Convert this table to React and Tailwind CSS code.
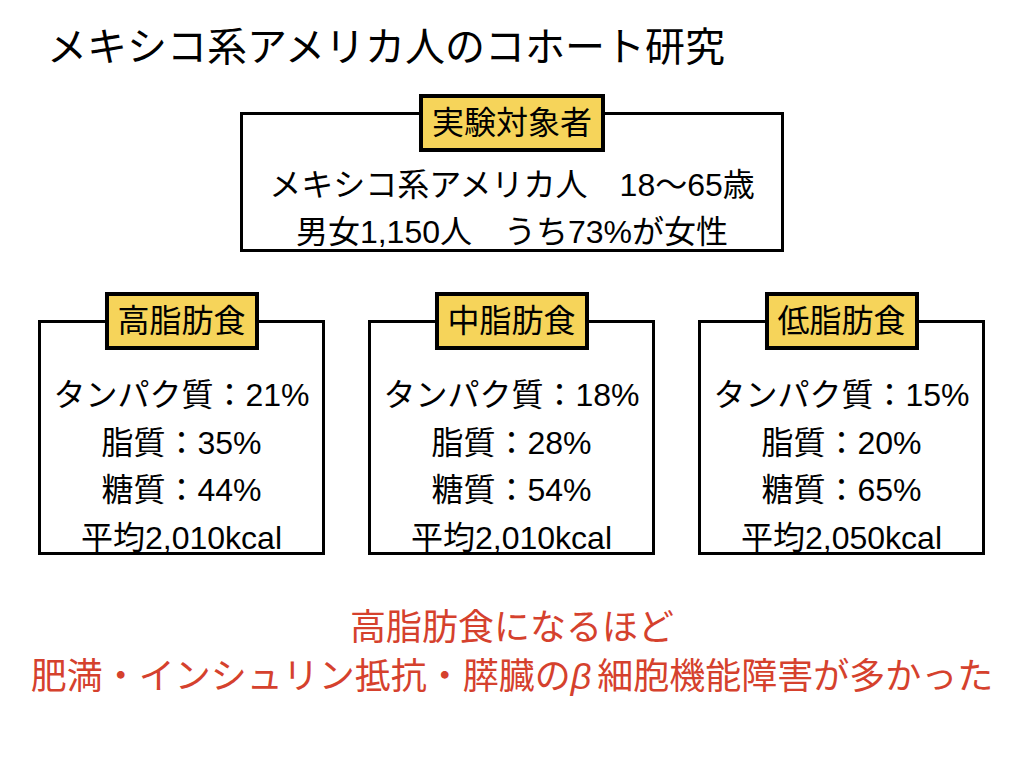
const font = { fontFamily: '"Liberation Sans", "Noto Sans CJK JP", sans-serif' };

const diets = [
  { name: "高脂肪食", protein: "21%", fat: "35%", carb: "44%", kcal: "2,010" },
  { name: "中脂肪食", protein: "18%", fat: "28%", carb: "54%", kcal: "2,010" },
  { name: "低脂肪食", protein: "15%", fat: "20%", carb: "65%", kcal: "2,050" },
];

function Label({ children, className }) {
  return (
    <div
      className={`absolute left-1/2 -translate-x-1/2 border-4 border-black bg-[#f6d45a] px-[9px] text-[32px] leading-[50px] text-black whitespace-nowrap ${className}`}
    >
      {children}
    </div>
  );
}

function DietBox({ diet }) {
  return (
    <div className="relative w-[287px] h-[235px] border-[3px] border-black">
      <Label className="top-[-31px]">{diet.name}</Label>
      <div className="pt-[49px] text-center text-[32px] leading-[47.5px] text-black">
        <div>タンパク質：{diet.protein}</div>
        <div>脂質：{diet.fat}</div>
        <div>糖質：{diet.carb}</div>
        <div>平均{diet.kcal}kcal</div>
      </div>
    </div>
  );
}

export default function App() {
  return (
    <div className="w-[1024px] h-[768px] bg-white overflow-hidden" style={font}>
      {/* Title */}
      <h1 className="pl-[47px] pt-[27px] text-[40px] leading-[40px] text-black font-normal">
        メキシコ系アメリカ人のコホート研究
      </h1>

      {/* Subjects */}
      <div className="relative ml-[240px] mt-[45px] w-[544px] h-[140px] border-[3px] border-black">
        <Label className="top-[-21px]">実験対象者</Label>
        <div className="pt-[47px] text-center text-[32px] leading-[47px] text-black">
          <div>メキシコ系アメリカ人　18〜65歳</div>
          <div>男女1,150人　うち73%が女性</div>
        </div>
      </div>

      {/* Diet groups */}
      <div className="flex gap-[43px] pl-[38px] mt-[68px]">
        {diets.map((d) => (
          <DietBox key={d.name} diet={d} />
        ))}
      </div>

      {/* Conclusion */}
      <div className="mt-[48px] text-center text-[36px] leading-[49px] text-[#d5412d]">
        <div>高脂肪食になるほど</div>
        <div>
          肥満・インシュリン抵抗・膵臓の<span className="italic mr-[6px]">β</span>細胞機能障害が多かった
        </div>
      </div>
    </div>
  );
}
